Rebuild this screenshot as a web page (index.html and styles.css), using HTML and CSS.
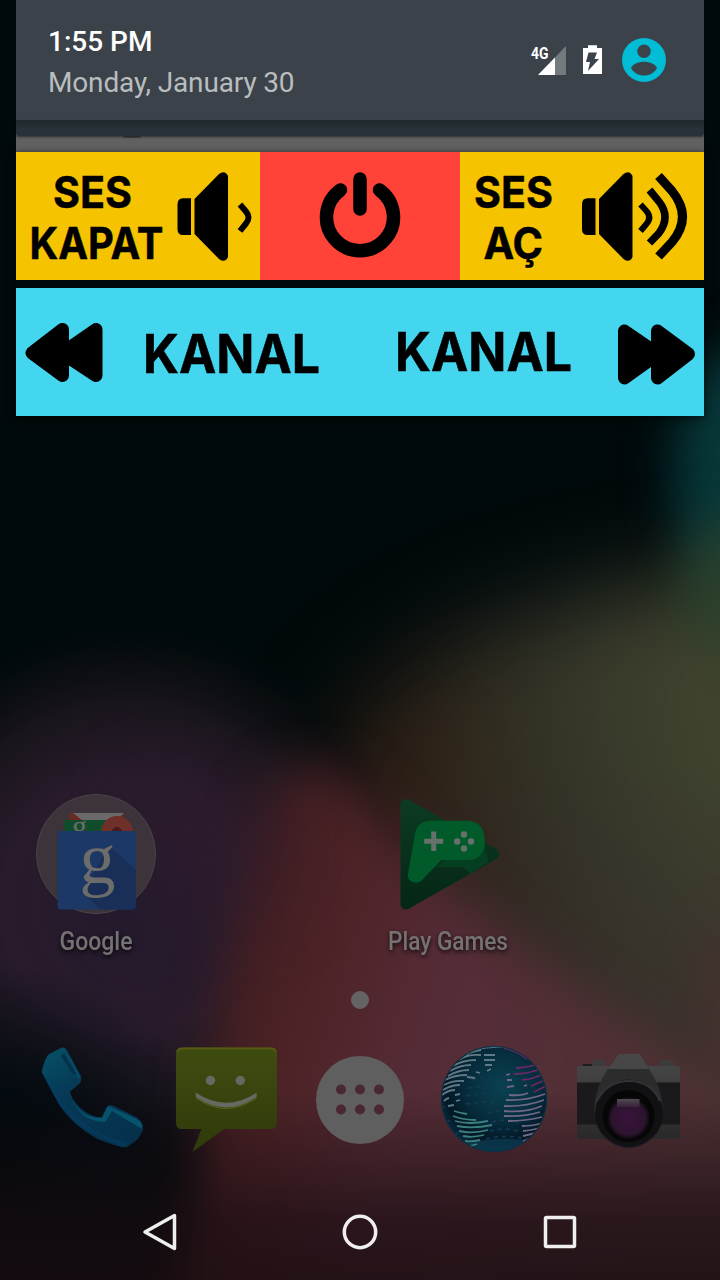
FILE: index.html
```html
<!DOCTYPE html>
<html lang="tr">
<head>
<meta charset="utf-8">
<title>Kumanda</title>
<link rel="stylesheet" href="styles.css">
</head>
<body>
<div class="screen">
  <svg class="wallpaper" viewBox="0 0 720 1280" aria-hidden="true">
    <defs>
      <filter id="b20" x="-50%" y="-50%" width="200%" height="200%" color-interpolation-filters="sRGB"><feGaussianBlur stdDeviation="24"/></filter>
      <filter id="b40" x="-50%" y="-50%" width="200%" height="200%" color-interpolation-filters="sRGB"><feGaussianBlur stdDeviation="46"/></filter>
      <linearGradient id="olive" gradientUnits="userSpaceOnUse" x1="290" y1="720" x2="700" y2="640">
        <stop offset="0" stop-color="#2a170f"/><stop offset=".3" stop-color="#2d2218"/><stop offset=".65" stop-color="#353629"/><stop offset="1" stop-color="#41442f"/>
      </linearGradient>
      <linearGradient id="oliveDown" x1="0" y1="0" x2="0" y2="1"><stop offset="0" stop-color="#352b2b" stop-opacity="0"/><stop offset="1" stop-color="#3a2e2d"/></linearGradient>
      <linearGradient id="rose" gradientUnits="userSpaceOnUse" x1="190" y1="960" x2="700" y2="1120">
        <stop offset="0" stop-color="#3c1d20"/><stop offset=".22" stop-color="#4c2225"/><stop offset=".45" stop-color="#552c36"/><stop offset="1" stop-color="#503235"/>
      </linearGradient>
      <radialGradient id="plum"><stop offset="0" stop-color="#231a2d"/><stop offset=".45" stop-color="#281b2b"/><stop offset=".7" stop-color="#1d171f" stop-opacity=".9"/><stop offset=".88" stop-color="#101014" stop-opacity=".5"/><stop offset="1" stop-color="#000a0c" stop-opacity="0"/></radialGradient>
      <linearGradient id="floor" x1="0" y1="0" x2="0" y2="1"><stop offset="0" stop-color="#160b10" stop-opacity="0"/><stop offset=".7" stop-color="#180c11" stop-opacity=".7"/><stop offset="1" stop-color="#180c10" stop-opacity=".8"/></linearGradient>
      <radialGradient id="night"><stop offset="0" stop-color="#00080b"/><stop offset=".5" stop-color="#020a10" stop-opacity=".8"/><stop offset="1" stop-color="#020a10" stop-opacity="0"/></radialGradient>
    </defs>
    <rect width="720" height="1280" fill="#00090b"/>
    <ellipse cx="745" cy="475" rx="72" ry="130" fill="#07383a" filter="url(#b20)"/>
    <path d="M310 790 Q370 660 520 615 T820 560 V1170 H600Z" fill="url(#olive)" filter="url(#b40)"/>
    <ellipse cx="740" cy="590" rx="60" ry="65" fill="#29442d" filter="url(#b20)" opacity=".7"/>
    <rect x="400" y="760" width="320" height="340" fill="url(#oliveDown)" opacity=".8"/>
    <circle cx="130" cy="905" r="285" fill="url(#plum)"/>
    <path d="M265 790 Q325 735 385 815 C450 895 570 995 780 1115 V1330 H170 Q205 1020 265 790Z" fill="url(#rose)" filter="url(#b20)"/>
    <circle cx="205" cy="850" r="70" fill="#321c2f" opacity=".6" filter="url(#b40)"/>
    <circle cx="0" cy="1190" r="225" fill="url(#night)"/>
    <rect y="1090" width="720" height="190" fill="url(#floor)"/>
    <ellipse cx="745" cy="1010" rx="45" ry="90" fill="#4b3030" opacity=".7" filter="url(#b20)"/>
  </svg>

  <header class="shade">
    <div class="statusbar">
      <div class="clock">
        <div class="time">1:55 PM</div>
        <div class="date">Monday, January 30</div>
      </div>
      <svg class="indicators" viewBox="0 0 140 48">
        <text x="1" y="22.500" class="network" textLength="17.500" lengthAdjust="spacingAndGlyphs">4G</text>
        <path d="M36 10V39H8Z" fill="#747b7f"/><path d="M25 21.500V39H8Z" fill="#fff"/>
        <path fill="#fff" d="M58 9.200h9v2.800h5V38H53V12h5z"/>
        <path fill="#3b4249" d="M58.500 16.500h8.500l-2.500 6.500h4.500L58 35l2-9H56z"/>
        <circle cx="114" cy="24" r="22" fill="#00bcd4"/>
        <circle cx="114" cy="15.300" r="6.700" fill="#3b4249"/>
        <path d="M101 32C105 23.500 123 23.500 127 32C122 42 106 42 101 32Z" fill="#3b4249"/>
      </svg>
    </div>
    <div class="shade-edge"></div>
    <div class="card-top"><span class="card-peek"></span></div>
  </header>

  <main class="remote">
    <div class="row">
      <svg class="tile yellow" viewBox="0 0 244 128">
        <text class="tile-label" x="37" y="56" textLength="79" lengthAdjust="spacingAndGlyphs">SES</text>
        <text class="tile-label" x="13.500" y="107" textLength="134" lengthAdjust="spacingAndGlyphs">KAPAT</text>
        <g id="speaker"><path d="M175 46.300h-8q-5.500 0-5.500 6V77q0 6 5.500 6h8z"/><path d="M178.500 47 203 22Q209 17.500 212 24V105Q209 111.500 203 107L178.500 82Z"/></g>
        <path class="wave w1" d="M224 52.500L230 59.500Q235 65.500 230 71.500L224 79"/>
      </svg>
      <svg class="tile red" viewBox="0 0 200 128">
        <path class="power" d="M80.500 38A33.500 33.500 0 1 0 119.500 38M100 27V57"/>
      </svg>
      <svg class="tile yellow" viewBox="0 0 244 128">
        <text class="tile-label" x="14" y="56" textLength="79" lengthAdjust="spacingAndGlyphs">SES</text>
        <text class="tile-label" x="23.500" y="107" textLength="59.500" lengthAdjust="spacingAndGlyphs">AÇ</text>
        <use href="#speaker" x="-39.500"/>
        <path class="wave w1" d="M180.500 52.500L186 58.500Q192.500 65.500 186 72.500L180.500 79"/>
        <path class="wave w2" d="M189.500 38L199 49.500Q211 65 199 81L189.500 91"/>
        <path class="wave w3" d="M198.500 24L212 39Q233 65 212 90L198.500 104.500"/>
      </svg>
    </div>
    <div class="row">
      <svg class="tile cyan" viewBox="0 0 344 128">
        <path class="skip" d="M16 65 46.500 41.500V87.500ZM46 65 80 41.500V87.500Z"/>
        <text class="channel" x="127" y="84.500" textLength="177" lengthAdjust="spacingAndGlyphs">KANAL</text>
      </svg>
      <svg class="tile cyan" viewBox="0 0 344 128">
        <text class="channel" x="35" y="82.500" textLength="177" lengthAdjust="spacingAndGlyphs">KANAL</text>
        <path class="skip" d="M328.500 66 297.500 43V90ZM298 66 264.500 43V90Z"/>
      </svg>
    </div>
  </main>

  <section class="apps">
    <div class="app">
      <svg class="app-icon" viewBox="0 0 124 124">
        <circle cx="62" cy="62" r="59.500" fill="#3d333a" stroke="#4b4248"/>
        <path d="M36 21h54v20H32z" fill="#672b24"/><path d="M39 21h51l-8 7H48z" fill="#6b6969"/>
        <path d="M30 28h60v16H30z" fill="#124d2b"/><text x="38" y="44" class="serif-g small">g</text>
        <circle cx="83" cy="40" r="16" fill="#70302a"/><circle cx="83" cy="40" r="5" fill="#431c1b"/>
        <rect x="23.500" y="39" width="78.500" height="78.500" rx="4" fill="#1c3867"/>
        <path d="M75 54 102 78V114q0 3.500-3.500 3.500H66L49 100Z" fill="#192f57"/>
        <text x="45.500" y="90.500" class="serif-g">g</text>
      </svg>
      <svg class="app-name" viewBox="0 0 176 48"><text x="88" y="34" textLength="73" lengthAdjust="spacingAndGlyphs">Google</text></svg>
    </div>
    <div class="app"></div>
    <div class="app">
      <svg class="app-icon" viewBox="0 0 124 124">
        <defs><linearGradient id="play" x1="0" y1="0" x2="0" y2="1"><stop offset="0" stop-color="#0c3a22"/><stop offset="1" stop-color="#052716"/></linearGradient></defs>
        <path d="M20 12.500V112L108 62Z" fill="url(#play)" stroke="url(#play)" stroke-width="11" stroke-linejoin="round"/>
        <path d="M98 52 102.500 70 84 81.500 77 75H50L62 66H85Z" fill="#043f22"/>
        <path d="M44 28.700H82C94 29 99 38 99 51Q97 68 82 68H55.500L38 86Q33 92 27 90Q21 88 22 82L29 41Q32 29 44 28.700Z" fill="#005a2a"/>
        <path d="M45.200 39.500h5v7.300h7v5h-7v7.300h-5v-7.300h-7v-5h7z" fill="#66716a"/>
        <g fill="#66716a"><circle cx="78" cy="42.500" r="3.200"/><circle cx="78" cy="56.500" r="3.200"/><circle cx="71.200" cy="49.500" r="3.200"/><circle cx="85" cy="49.500" r="3.200"/></g>
      </svg>
      <svg class="app-name" viewBox="0 0 176 48"><text x="88" y="34" textLength="120" lengthAdjust="spacingAndGlyphs">Play Games</text></svg>
    </div>
    <div class="app"></div>
  </section>
  <div class="pager"><span class="page-dot"></span></div>

  <section class="dock">
    <svg class="dock-icon" viewBox="0 0 112 112">
      <defs><linearGradient id="tel" x1="0" y1="0" x2=".7" y2="1"><stop offset="0" stop-color="#065268"/><stop offset=".4" stop-color="#063a57"/><stop offset="1" stop-color="#05314d"/></linearGradient></defs>
      <path d="M5.700 29Q9 14 13 11L26 4.500Q29 4 31 8L45 33Q46 38 43 41L34 48.500Q36 59 47 67Q57 75 66 74L70 65Q73 60 78 63L100 74Q108 79 107 87L102 96 91 104Q86 106 60.700 95.500 37 82 24 63Q17 51 5.700 29Z" fill="url(#tel)"/>
      <path d="M13 12 26 5Q29 4 31 8L44 33Q45 37 41 35L25 9Z" fill="#064a63"/><path d="M28 10 41 32 36 30 25 13Z" fill="#033149"/>
      <path d="M35 52Q42 75 66 75L72 63 101 76Q107 80 106 86L76 68 69 79Q43 79 35 52Z" fill="#07536c"/>
      <path d="M8 32Q28 77 56 90T86 104L101 96Q94 102 86 98Q41 88 8 32Z" fill="#063c60" opacity=".6"/>
    </svg>
    <svg class="dock-icon" viewBox="0 0 112 112">
      <defs><linearGradient id="sms" x1="0" y1="0" x2="0" y2="1"><stop offset="0" stop-color="#3f4c10"/><stop offset="1" stop-color="#2e3b0b"/></linearGradient></defs>
      <path d="M12 4.500H101Q107 5 107 11V80Q106 86 101 86H54L22.500 109 31.500 86H12Q6 86 6 80V11Q6 5 12 4.500Z" fill="url(#sms)"/>
      <path d="M7 9Q8 5.500 12 5.500H101Q105 5.500 106 9" fill="none" stroke="#565a12" stroke-width="2"/>
      <g fill="#656962"><circle cx="40.500" cy="37.500" r="4.700"/><circle cx="70.300" cy="37.500" r="4.700"/><path d="M25.700 49.500Q56 70 86.700 49.500V54Q56 75 25.700 54Z"/></g>
      <path d="M26 55Q56 76 86.500 55" fill="none" stroke="#53661a"/>
    </svg>
    <svg class="dock-icon" viewBox="0 0 112 112">
      <circle cx="56" cy="57" r="44" fill="#5f5f5f"/>
      <g fill="#4a2831"><circle cx="37" cy="46.500" r="5"/><circle cx="56" cy="46.500" r="5"/><circle cx="75" cy="46.500" r="5"/><circle cx="37" cy="66.500" r="5"/><circle cx="56" cy="66.500" r="5"/><circle cx="75" cy="66.500" r="5"/></g>
    </svg>
    <svg class="dock-icon" viewBox="0 0 112 112">
      <defs>
        <radialGradient id="globe" cx=".58" cy=".38" r=".65"><stop offset="0" stop-color="#0b4250"/><stop offset=".55" stop-color="#062b3b"/><stop offset=".82" stop-color="#041724"/><stop offset="1" stop-color="#0a2c40"/></radialGradient>
        <clipPath id="disc"><circle cx="56" cy="56" r="52.500"/></clipPath>
      </defs>
      <circle cx="56" cy="56" r="53" fill="url(#globe)"/>
      <g clip-path="url(#disc)" fill="none" stroke-width="1.800">
        <path d="M22 102Q56 92 96 98L85 112H30Z" fill="#0b3a50" opacity=".8"/>
        <path stroke="#103a54" stroke-dasharray="4 4" d="M34 37Q58 31 72 37M30 45Q58 40 70 45M28 53Q52 48 66 53M28 61Q50 57 62 61M50 70Q60 67 68 69M54 79Q68 75 80 79M52 88Q66 84 80 88M48 96Q66 91 90 96M3 65 15 62M8 79 15 77M16 92 22 89"/>
        <path stroke="#5f7a86" d="M36 7Q55 2 73 5M28 12Q34 8 43 7M21 17Q29 11 43 12M15 23Q25 17 38 17M12 28Q22 22 33 22M10 33Q20 27 31 27M7 37Q16 32 29 32M6 42Q15 37 26 38M5 47Q13 42 22 42M4 52Q10 47 17 47M6 58Q9 55 11 55M29 34 37 35M38 29 42 30M46 12H57M46 17H57M47 22H54M49 28 53 26M17 52 22 51M10 63 16 62M18 58 22 57"/>
        <path stroke="#3d8080" d="M16 68Q22 70 29 71M15 73Q25 77 38 77M17 78Q31 82 50 78M19 83Q35 86 54 82M21 88Q35 91 50 87M25 93Q34 95 46 92M27 98Q33 99 42 97M29 103Q34 103 39 101"/>
        <path stroke="#6f6888" d="M68 32 72 31M69 37 74 37M69 44 76 43M86 43 89 42M71 52Q84 53 90 50M68 57Q88 58 107 51M66 63Q87 64 106 57M66 68Q87 70 104 63M66 73Q86 74 102 69M70 78Q88 78 104 74M84 83Q96 83 104 80M85 88Q95 87 101 85M85 93 98 90M85 98 95 95M85 103 91 100"/>
        <path stroke="#6b2868" d="M66 5Q80 8 89 16M78 25Q93 24 99 21M76 31Q90 31 102 26M84 37Q96 36 105 31M93 43 107 37M96 49 108 43"/>
      </g>
      <circle cx="56" cy="56" r="52.500" fill="none" stroke="#0a3445"/>
    </svg>
    <svg class="dock-icon" viewBox="0 0 112 112">
      <defs>
        <linearGradient id="metal" x1="0" y1="0" x2="0" y2="1"><stop offset="0" stop-color="#454545"/><stop offset="1" stop-color="#292929"/></linearGradient>
        <linearGradient id="flare" x1="0" y1="0" x2="0" y2="1"><stop offset="0" stop-color="#504b50"/><stop offset="1" stop-color="#38203a"/></linearGradient>
        <radialGradient id="glass" cx=".5" cy=".5" r=".5"><stop offset="0" stop-color="#3a123c"/><stop offset=".8" stop-color="#2c142e"/><stop offset="1" stop-color="#0b090c"/></radialGradient>
      </defs>
      <path d="M19 20q0-3 4-3h6q4 0 4 3v6H19zM87 20q0-3 4-3h7q4 0 4 3v6H87z" fill="#3c3c3c"/><path d="M11 21h9v3h-9z" fill="#1c1c1c"/>
      <rect x="5" y="23" width="103" height="73" rx="2" fill="url(#metal)"/>
      <path d="M5 39.500H108V81.500H5Z" fill="#1a191b"/>
      <path d="M46.500 11H68L77 26Q91 46 91 70H22Q22 46 36 26Z" fill="#2c2c2c"/><path d="M46.500 11H68L77 26H36Z" fill="#474747"/>
      <circle cx="57" cy="70.500" r="34" fill="#111113"/>
      <path d="M25 58Q35 38 57 38Q79 38 88 58" fill="none" stroke="#333439" stroke-width="2"/>
      <circle cx="56.500" cy="73" r="26" fill="#060607"/><circle cx="56.500" cy="75" r="21" fill="url(#glass)"/>
      <path d="M45 56H67.500V64H45Z" fill="url(#flare)"/>
      <path d="M31 92Q56 117 83 92" fill="none" stroke="#1d1c30"/>
    </svg>
  </section>

  <nav class="navbar">
    <svg viewBox="0 0 40 40"><path d="M5 20 34.500 3.500V36.500Z"/></svg>
    <svg viewBox="0 0 40 40"><circle cx="20" cy="20" r="15.700"/></svg>
    <svg viewBox="0 0 40 40"><rect x="5.500" y="5.500" width="29" height="29" rx="1"/></svg>
  </nav>
</div>
</body>
</html>
```

FILE: styles.css
```css
* { box-sizing: border-box; }
body { margin: 0; background: #00090b; font-family: Roboto, "Liberation Sans", sans-serif; }
svg { display: block; }
.screen { position: relative; width: 720px; height: 1280px; overflow: hidden; display: flex; flex-direction: column; }
.screen > * { position: relative; }
.screen > .wallpaper { position: absolute; inset: 0; width: 720px; height: 1280px; }

.shade { margin: 0 16px; background: #616161; }
.statusbar { height: 120px; padding: 0 34px 0 32px; background: #3b4249; display: flex; justify-content: space-between; align-items: center; }
.clock { display: flex; flex-direction: column; gap: 1px; padding-top: 4px; }
.time, .date { font-size: 28px; line-height: 40px; white-space: nowrap; }
.time { color: #fff; font-weight: 500; }
.date { color: #babdbf; letter-spacing: -0.150px; }
.indicators { width: 140px; height: 48px; }
.network { font: 700 17px Roboto, sans-serif; fill: #fff; }
.shade-edge { position: relative; height: 16px; border-radius: 0 0 3px 3px; background: linear-gradient(#1f272c, #263238 60%); box-shadow: 0 1px 2px rgba(0, 0, 0, .45); }
.card-top { height: 16px; overflow: hidden; background: linear-gradient(#5c5c5c, #616161 30%, #616161 80%, #585858); padding-left: 107px; }
.card-peek { display: block; width: 18px; height: 2px; background: #3c3f40; border-radius: 0 0 9px 9px; }

.remote { margin: 0 16px; display: flex; flex-direction: column; gap: 8px; box-shadow: 0 2px 8px rgba(0, 0, 0, .6); }
.row { display: flex; height: 128px; }
.tile { height: 128px; }
.yellow { width: 244px; background: #f6c300; }
.red { width: 200px; background: #ff4338; }
.cyan { width: 344px; background: #44d5ef; }
.tile-label { font: 700 44px Inter, sans-serif; stroke: #000; stroke-width: .5px; }
.channel { font: 700 53px Inter, sans-serif; stroke: #000; stroke-width: .5px; }
.wave { fill: none; stroke: #000; }
.w1 { stroke-width: 6px; }
.w2 { stroke-width: 7.500px; }
.w3 { stroke-width: 9px; }
.power { fill: none; stroke: #000; stroke-width: 13.500px; stroke-linecap: round; }
.skip { stroke: #000; stroke-width: 13px; stroke-linejoin: round; }

.apps { margin-top: 376px; padding: 0 8px; display: grid; grid-template-columns: repeat(4, 1fr); }
.app { display: flex; flex-direction: column; align-items: center; height: 172px; }
.app-icon { width: 124px; height: 124px; }
.app-name { width: 176px; height: 48px; font-size: 26px; font-weight: 500; fill: #757274; text-anchor: middle; filter: drop-shadow(0 2px 2px rgba(0, 0, 0, .8)); }
.serif-g { font: 72px "Liberation Serif", serif; fill: #6c6c6b; }
.serif-g.small { font-size: 30px; }

.pager { height: 72px; display: flex; align-items: center; justify-content: center; }
.page-dot { width: 18px; height: 18px; border-radius: 50%; background: #646464; }

.dock { margin-top: 7px; padding: 0 25px; height: 112px; display: grid; grid-template-columns: repeat(5, 1fr); justify-items: center; }
.dock-icon { width: 112px; height: 112px; }

.navbar { margin-top: 29px; height: 96px; padding: 0 60px; display: grid; grid-template-columns: repeat(3, 1fr); place-items: center; }
.navbar svg { width: 40px; height: 40px; fill: none; stroke: #efefef; stroke-width: 3.500px; stroke-linejoin: round; }
```
